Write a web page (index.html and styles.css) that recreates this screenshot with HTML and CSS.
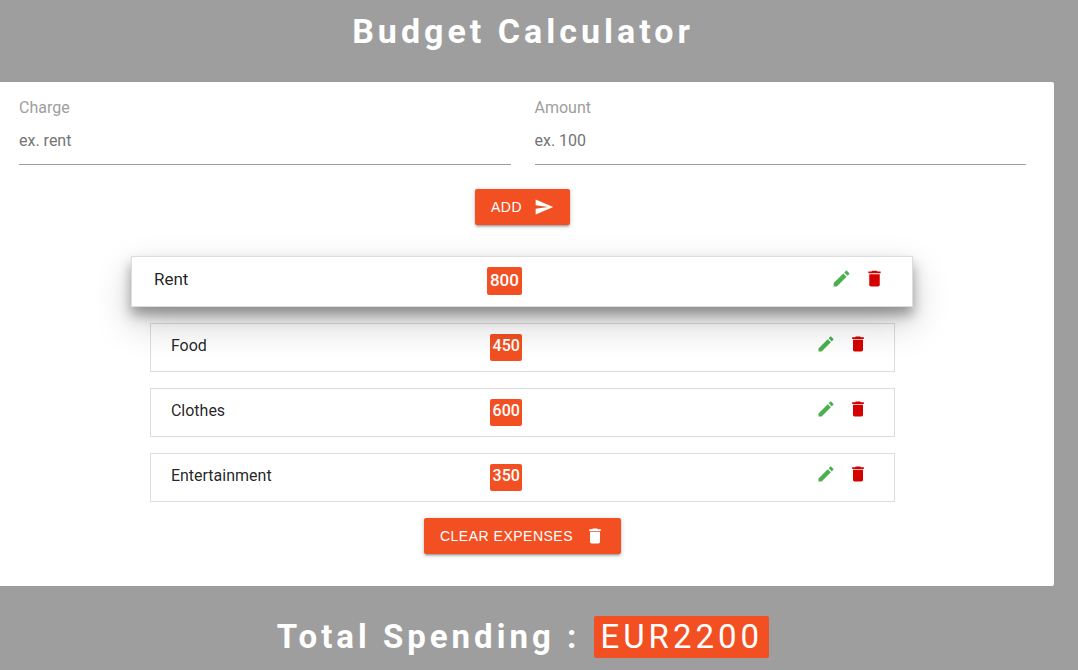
FILE: index.html
```html
<!DOCTYPE html>
<html lang="en">
<head>
<meta charset="utf-8">
<meta name="viewport" content="width=device-width, initial-scale=1">
<title>Budget Calculator</title>
<link rel="stylesheet" href="styles.css">
</head>
<body>
<svg class="sprite" aria-hidden="true">
  <symbol id="edit" viewBox="0 0 24 24"><path d="M3 17.25V21h3.75L17.81 9.94l-3.75-3.75L3 17.25zM20.71 7.04c.39-.39.39-1.02 0-1.41l-2.34-2.34c-.39-.39-1.02-.39-1.41 0l-1.83 1.83 3.75 3.75 1.83-1.83z"/></symbol>
  <symbol id="trash" viewBox="0 0 24 24"><path d="M6 19c0 1.1.9 2 2 2h8c1.1 0 2-.9 2-2V7H6v12zM19 4h-3.5l-1-1h-5l-1 1H5v2h14V4z"/></symbol>
  <symbol id="send" viewBox="0 0 24 24"><path d="M2.01 21L23 12 2.01 3 2 10l15 2-15 2z"/></symbol>
</svg>
<h1 class="title">Budget Calculator</h1>
<main class="app">
  <form class="form">
    <div class="fields">
      <div class="field">
        <label for="charge">Charge</label>
        <input id="charge" type="text" placeholder="ex. rent">
      </div>
      <div class="field">
        <label for="amount">Amount</label>
        <input id="amount" type="text" placeholder="ex. 100">
      </div>
    </div>
    <button class="btn" type="submit">ADD<svg class="icon"><use href="#send"/></svg></button>
  </form>
  <ul class="list">
    <li class="item item-active">
      <span class="expense">Rent</span><span class="amount">800</span>
      <div class="actions">
        <button class="edit" type="button" aria-label="Edit Rent"><svg class="icon"><use href="#edit"/></svg></button>
        <button class="delete" type="button" aria-label="Delete Rent"><svg class="icon"><use href="#trash"/></svg></button>
      </div>
    </li>
    <li class="item">
      <span class="expense">Food</span><span class="amount">450</span>
      <div class="actions">
        <button class="edit" type="button" aria-label="Edit Food"><svg class="icon"><use href="#edit"/></svg></button>
        <button class="delete" type="button" aria-label="Delete Food"><svg class="icon"><use href="#trash"/></svg></button>
      </div>
    </li>
    <li class="item">
      <span class="expense">Clothes</span><span class="amount">600</span>
      <div class="actions">
        <button class="edit" type="button" aria-label="Edit Clothes"><svg class="icon"><use href="#edit"/></svg></button>
        <button class="delete" type="button" aria-label="Delete Clothes"><svg class="icon"><use href="#trash"/></svg></button>
      </div>
    </li>
    <li class="item">
      <span class="expense">Entertainment</span><span class="amount">350</span>
      <div class="actions">
        <button class="edit" type="button" aria-label="Edit Entertainment"><svg class="icon"><use href="#edit"/></svg></button>
        <button class="delete" type="button" aria-label="Delete Entertainment"><svg class="icon"><use href="#trash"/></svg></button>
      </div>
    </li>
  </ul>
  <button class="btn" type="button">CLEAR EXPENSES<svg class="icon"><use href="#trash"/></svg></button>
</main>
<h2 class="title total">Total Spending : <span class="sum">EUR2200</span></h2>
</body>
</html>
```
FILE: styles.css
```css
* { box-sizing: border-box; }

body {
  margin: 0;
  padding-right: 24px;
  background: #9e9e9e;
  color: rgba(0, 0, 0, 0.87);
  font: 16px/24px Roboto, sans-serif;
}

.sprite { display: none; }

.icon {
  display: block;
  width: 20px;
  height: 20px;
  fill: currentColor;
}

.title {
  margin: 0;
  padding: 10px 8px 30px 0;
  color: #fff;
  font-size: 34px;
  font-weight: 700;
  line-height: 42px;
  letter-spacing: 4px;
  text-align: center;
}

.app {
  display: flex;
  flex-direction: column;
  align-items: center;
  padding: 14px 28px 32px 19px;
  background: #fff;
  border-radius: 0 2px 2px 0;
}

.form {
  display: flex;
  flex-direction: column;
  align-items: center;
  width: 100%;
}

.fields {
  display: grid;
  grid-template-columns: 1fr 1fr;
  gap: 24px;
  width: 100%;
  margin-bottom: 24px;
}

.field {
  display: flex;
  flex-direction: column;
}

.field label { color: #9e9e9e; }

.field input {
  width: 100%;
  height: 45px;
  padding: 0 0 4px;
  border: 0;
  border-bottom: 1px solid #9e9e9e;
  background: transparent;
  color: inherit;
  font: inherit;
  outline: none;
}

.field input::placeholder { color: #757575; opacity: 1; }

.btn {
  display: flex;
  align-items: center;
  gap: 12px;
  height: 36px;
  padding: 0 16px;
  border: 0;
  border-radius: 2px;
  background: #f25022;
  box-shadow: 0 2px 2px rgba(0, 0, 0, 0.14), 0 3px 1px -2px rgba(0, 0, 0, 0.12), 0 1px 5px rgba(0, 0, 0, 0.2);
  color: #fff;
  font: 14px/36px "Liberation Sans", Arial, sans-serif;
  letter-spacing: 0.5px;
  cursor: pointer;
}

.list {
  display: flex;
  flex-direction: column;
  gap: 16px;
  width: 74%;
  margin: 31px 0 16px;
  padding: 0;
  list-style: none;
}

.item {
  display: grid;
  grid-template-columns: 46% 1fr auto;
  align-items: start;
  padding: 10px 26px 10px 20px;
  border: 1px solid #ddd;
}

.item-active {
  z-index: 1;
  grid-template-columns: 45% 1fr auto;
  margin: 0 -18px 0 -19px;
  padding: 10px 27px 11px 22px;
  background: #fff;
  box-shadow: 0 8px 12px rgba(0, 0, 0, 0.35), 0 16px 38px rgba(0, 0, 0, 0.2);
  font-size: 17px;
}

.amount {
  justify-self: start;
  margin-left: -2px;
  padding: 0 2px 3px 3px;
  border-radius: 2px;
  background: #f25022;
  color: #fff;
  font-weight: 500;
}

.item-active .amount {
  margin-left: 4px;
  padding: 1px 3px 3px;
}

.actions {
  display: flex;
  gap: 12px;
}

.actions button {
  padding: 0;
  border: 0;
  background: none;
  cursor: pointer;
}

.item-active .icon {
  width: 21px;
  height: 21px;
  margin-top: 1px;
}

.actions .edit { color: #4caf50; }
.actions .delete { color: #d50000; }

.total {
  padding: 30px 8px 12px 0;
  font-size: 33px;
}

.sum {
  display: inline-block;
  margin-left: 2px;
  padding: 0 6px;
  border-radius: 2px;
  background: #f25022;
  font-weight: 400;
}
```
